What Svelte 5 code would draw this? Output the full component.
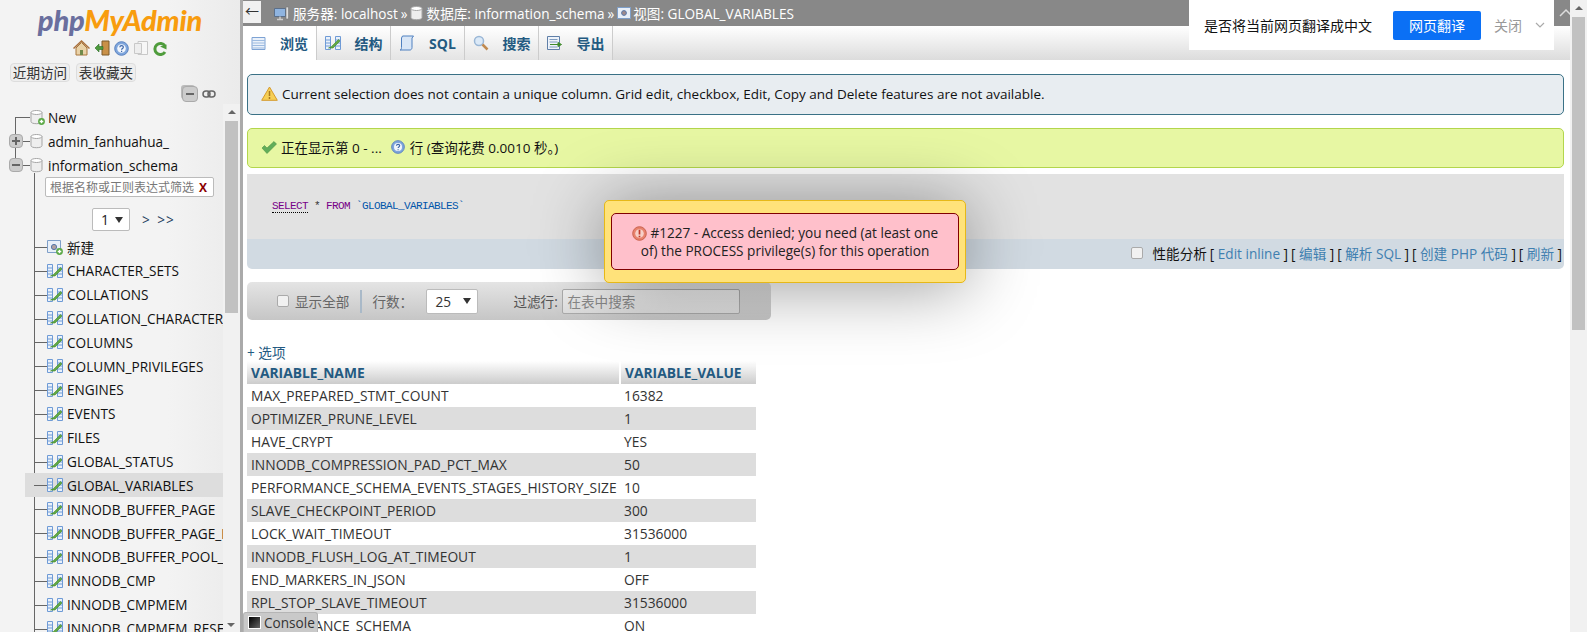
<script>
  const tables = [
    "CHARACTER_SETS", "COLLATIONS", "COLLATION_CHARACTER_SET_APPLICABILITY", "COLUMNS",
    "COLUMN_PRIVILEGES", "ENGINES", "EVENTS", "FILES", "GLOBAL_STATUS", "GLOBAL_VARIABLES",
    "INNODB_BUFFER_PAGE", "INNODB_BUFFER_PAGE_LRU", "INNODB_BUFFER_POOL_STATS", "INNODB_CMP",
    "INNODB_CMPMEM", "INNODB_CMPMEM_RESET"
  ];
  const rows = [
    ["MAX_PREPARED_STMT_COUNT", "16382"],
    ["OPTIMIZER_PRUNE_LEVEL", "1"],
    ["HAVE_CRYPT", "YES"],
    ["INNODB_COMPRESSION_PAD_PCT_MAX", "50"],
    ["PERFORMANCE_SCHEMA_EVENTS_STAGES_HISTORY_SIZE", "10"],
    ["SLAVE_CHECKPOINT_PERIOD", "300"],
    ["LOCK_WAIT_TIMEOUT", "31536000"],
    ["INNODB_FLUSH_LOG_AT_TIMEOUT", "1"],
    ["END_MARKERS_IN_JSON", "OFF"],
    ["RPL_STOP_SLAVE_TIMEOUT", "31536000"],
    ["PERFORMANCE_SCHEMA", "ON"]
  ];
  const actions = ["Edit inline", "编辑", "解析 SQL", "创建 PHP 代码", "刷新"];
</script>

{#snippet db(plus)}
  <svg class="ico" width="16" height="16" viewBox="0 0 16 16">
    <path d="M2 3.500v9c0 1.400 2.200 2.200 5.500 2.200s5.500-.8 5.500-2.200v-9z" fill="#eee" stroke="#a5a5a5"/>
    <ellipse cx="7.500" cy="3.500" rx="5.500" ry="2" fill="#fff" stroke="#a5a5a5"/>
    {#if plus}
      <circle cx="12.500" cy="12.500" r="3.400" fill="#5aa845"/>
      <path d="M10.700 12.500h3.600M12.500 10.700v3.600" stroke="#fff" stroke-width="1.300"/>
    {/if}
  </svg>
{/snippet}

{#snippet tableIco()}
  <svg class="ico" width="16" height="16" viewBox="0 0 16 16">
    <path d="M.5 1.500h5v13h-5zM10.500 1.500h5v13h-5z" fill="#eaf1fa" stroke="#6f9bd6"/>
    <path d="M.5 5h5M.5 8h5M.5 11h5M10.500 5h5M10.500 8h5M10.500 11h5" stroke="#6f9bd6"/>
    <path d="M3.500 13l3-1.500 7-7 1.500 1.500-7 7z" fill="#62a844" stroke="#3f8a2c" stroke-width=".6"/>
  </svg>
{/snippet}

{#snippet expander(sign)}
  <span class="expander"><i class:v={sign === "+"}></i></span>
{/snippet}

<div class="page">
  <nav class="nav">
    <div class="logo"><em>php</em><b>MyAdmin</b></div>
    <div class="quick">
      <svg width="17" height="16" viewBox="0 0 17 16">
        <path d="M3 8v7h11V8L8.500 2.500z" fill="#e9d2a8" stroke="#a8763c"/>
        <path d="M.5 8.500l8-7.500 8 7.500" fill="none" stroke="#a9703c" stroke-width="1.500"/>
        <path d="M7 10h3v5H7z" fill="#6f8a4a"/>
      </svg>
      <svg width="16" height="16" viewBox="0 0 16 16">
        <path d="M8 1h7v14H8z" fill="#c99048" stroke="#7d5a2a"/>
        <path d="M1 8l4-4v2.500h4v3H5V12z" fill="#4c9a3c" stroke="#2e6b26" stroke-width=".6"/>
      </svg>
      <svg width="15" height="15" viewBox="0 0 15 15">
        <circle cx="7.500" cy="7.500" r="6.800" fill="#7fa6dc" stroke="#5a82c0"/>
        <circle cx="7.500" cy="7.500" r="4.300" fill="#f2f6fc"/>
        <path d="M5.800 6.200c.2-2.200 3.600-2 3.500 0 0 1.300-1.700 1.300-1.700 2.500M7.600 9.800v1.200" fill="none" stroke="#3c66a8" stroke-width="1.200"/>
      </svg>
      <svg width="16" height="16" viewBox="0 0 16 16">
        <path d="M5 1.500h9.500v13H5z" fill="#f7f7f7" stroke="#c8c8c8"/>
        <path d="M1.500 3.500h7v10h-7z" fill="#eee" stroke="#c8c8c8"/>
      </svg>
      <svg width="14" height="15" viewBox="0 0 14 15">
        <path d="M12 5A5.500 5.500 0 1 0 12 11" fill="none" stroke="#4f9c3c" stroke-width="3"/>
        <path d="M7 5.500l6.500-2v5z" fill="#4f9c3c"/>
      </svg>
    </div>
    <div class="navbtns"><span>近期访问</span><span>表收藏夹</span></div>
    <div class="treetools">
      <span class="collapse"><i></i></span>
      <svg width="14" height="8" viewBox="0 0 14 8">
        <rect x="1" y="1" width="7" height="6" rx="3" fill="none" stroke="#666" stroke-width="1.500"/>
        <rect x="6" y="1" width="7" height="6" rx="3" fill="none" stroke="#666" stroke-width="1.500"/>
      </svg>
    </div>

    <div class="treewrap">
      <div class="tree">
        <div class="dbrow first">{@render db(true)}<span>New</span></div>
        <div class="dbrow">{@render expander("+")}{@render db(false)}<span>admin_fanhuahua_</span></div>
        <div class="dbrow last">{@render expander("-")}{@render db(false)}<span>information_schema</span></div>

        <div class="sub">
          <div class="filter"><span>根据名称或正则表达式筛选</span><b>X</b></div>
          <div class="pager">
            <span class="pagesel">1<i class="caret"></i></span>
            <span class="pagelinks">&gt; &gt;&gt;</span>
          </div>
          <div class="item new">
            <svg class="ico" width="16" height="16" viewBox="0 0 16 16">
              <path d="M.5 1.500h13v12H.5z" fill="#e8eff8" stroke="#7e9fc9"/>
              <circle cx="7" cy="8" r="2.600" fill="#b0a0a0" stroke="#5577aa"/>
              <circle cx="12.500" cy="12.500" r="3.400" fill="#5aa845"/>
              <path d="M10.700 12.500h3.600M12.500 10.700v3.600" stroke="#fff" stroke-width="1.300"/>
            </svg>
            <span>新建</span>
          </div>
          {#each tables as t}
            <div class="item" class:on={t === "GLOBAL_VARIABLES"}>{@render tableIco()}<span>{t}</span></div>
          {/each}
        </div>
      </div>
      <div class="navscroll">
        <i class="up"></i>
        <div class="thumb"></div>
        <i class="down"></i>
      </div>
    </div>
  </nav>

  <main class="main">
    <header class="crumbs">
      <span class="back">←</span>
      <svg width="15" height="15" viewBox="0 0 15 15">
        <path d="M.5 2.500h11v8H.5z" fill="#8fb4e0" stroke="#5b6f8a"/>
        <path d="M3 13.500h6M6 10.500v3" stroke="#ccc" stroke-width="1.500"/>
        <path d="M12 1h2.500v12H12z" fill="#ddd" stroke="#777" stroke-width=".6"/>
      </svg>
      <span class="c">服务器: localhost</span><span class="sep">»</span>
      {@render db(false)}
      <span class="c">数据库: information_schema</span><span class="sep">»</span>
      <svg class="viewico" width="14" height="14" viewBox="0 0 14 14">
        <path d="M.5 1.500h13v11H.5z" fill="#e8eff8" stroke="#7e9fc9"/>
        <circle cx="7" cy="7" r="2.400" fill="#a08a8a" stroke="#5577aa"/>
      </svg>
      <span class="c">视图: GLOBAL_VARIABLES</span>
      <svg class="hide" width="16" height="10" viewBox="0 0 16 10"><path d="M2 8l6-6 6 6" fill="none" stroke="#ddd" stroke-width="1.500"/></svg>
    </header>

    <div class="tabs">
      <div class="tab active">
        <svg width="15" height="15" viewBox="0 0 15 15">
          <path d="M1 1.500h13v12H1z" fill="#eaf1fa" stroke="#7ea3d4"/>
          <path d="M1 4.500h13M1 7h13M1 9.500h13M1 12h13" stroke="#9dbbe0"/>
        </svg>
        <span>浏览</span>
      </div>
      <div class="tab">{@render tableIco()}<span>结构</span></div>
      <div class="tab">
        <svg width="16" height="16" viewBox="0 0 16 16">
          <path d="M3.500 1h11l-1.500 2v9.500c0 1.500-1 2.500-2 2.500H1c1 0 1.500-1 1.500-2.500V3z" fill="#d9e6f6" stroke="#4f80c0"/>
        </svg>
        <span>SQL</span>
      </div>
      <div class="tab">
        <svg width="16" height="16" viewBox="0 0 16 16">
          <circle cx="6" cy="6" r="4.500" fill="#dbe9f7" stroke="#9ab7d6" stroke-width="1.500"/>
          <path d="M9.500 9.500l5 5" stroke="#c08a50" stroke-width="2.500"/>
        </svg>
        <span>搜索</span>
      </div>
      <div class="tab">
        <svg width="16" height="16" viewBox="0 0 16 16">
          <path d="M.5 1.500h12v13H.5z" fill="#eef3fa" stroke="#5f7fa8"/>
          <path d="M2.500 4.500h8M2.500 7h8M2.500 12h8" stroke="#7f9cc0"/>
          <path d="M3 9.500h10M11 7.500l3.500 2-3.500 2z" fill="#4c9a3c" stroke="#3f8a2c"/>
        </svg>
        <span>导出</span>
      </div>
    </div>

    <div class="content">
      <div class="notice warn">
        <svg width="17" height="15" viewBox="0 0 17 15">
          <path d="M8.500 1L16.300 14.300H.7z" fill="#f6cf55" stroke="#d59a2c" stroke-linejoin="round"/>
          <path d="M8.500 5v5M8.500 11v2" stroke="#a97a20" stroke-width="1.500"/>
        </svg>
        <span>Current selection does not contain a unique column. Grid edit, checkbox, Edit, Copy and Delete features are not available.</span>
      </div>
      <div class="notice ok">
        <svg width="16" height="13" viewBox="0 0 16 13">
          <path d="M1 7l2.500-2.500L6 7l7-6.500L15.500 3 6 12.500z" fill="#62ad5a" stroke="#4b9544" stroke-width=".6"/>
        </svg>
        <span>正在显示第 0 - ...</span>
        <svg class="help" width="14" height="14" viewBox="0 0 15 15">
          <circle cx="7.500" cy="7.500" r="6.800" fill="#7fa6dc" stroke="#5a82c0"/>
          <circle cx="7.500" cy="7.500" r="4.300" fill="#f2f6fc"/>
          <path d="M5.800 6.200c.2-2.200 3.600-2 3.500 0 0 1.300-1.700 1.300-1.700 2.500M7.600 9.800v1.200" fill="none" stroke="#3c66a8" stroke-width="1.200"/>
        </svg>
        <span>行 (查询花费 0.0010 秒。)</span>
      </div>

      <div class="sqlbox">
        <div class="code">
          <span class="kw under">SELECT</span> <span class="star">*</span> <span class="kw">FROM</span> <span class="str">`GLOBAL_VARIABLES`</span>
        </div>
        <div class="sqlactions">
          <span class="cb"></span>
          <span class="lbl">性能分析</span>
          {#each actions as a}
            <span class="act">[ <a href="#top">{a}</a> ]</span>
          {/each}
        </div>
      </div>

      <div class="toolbar">
        <span class="cb"></span>
        <span class="showall">显示全部</span>
        <span class="divider"></span>
        <span class="rowsn">行数：</span>
        <span class="rowsel">25<i class="caret"></i></span>
        <span class="flabel">过滤行:</span>
        <span class="search">在表中搜索</span>
      </div>

      <div class="opts">+ 选项</div>
      <table>
        <thead>
          <tr><th>VARIABLE_NAME</th><th>VARIABLE_VALUE</th></tr>
        </thead>
        <tbody>
          {#each rows as r}
            <tr><td>{r[0]}</td><td>{r[1]}</td></tr>
          {/each}
        </tbody>
      </table>
    </div>
  </main>

  <div class="pagescroll">
    <i class="up"></i>
    <div class="thumb"></div>
  </div>

  <div class="translate">
    <span class="q">是否将当前网页翻译成中文</span>
    <span class="go">网页翻译</span>
    <span class="close">关闭</span>
    <svg width="10" height="6" viewBox="0 0 10 6"><path d="M1 1l4 4 4-4" fill="none" stroke="#aaa" stroke-width="1.200"/></svg>
  </div>

  <div class="dialog">
    <div class="err">
      <svg width="15" height="15" viewBox="0 0 15 15">
        <circle cx="7.500" cy="7.500" r="6.800" fill="#e8816c" stroke="#c9634f"/>
        <circle cx="7.500" cy="7.500" r="4.300" fill="#f7d0c8"/>
        <path d="M7.500 3.800v4.700M7.500 9.700v1.600" stroke="#c0392b" stroke-width="1.700"/>
      </svg>
      #1227 - Access denied; you need (at least one<br />of) the PROCESS privilege(s) for this operation
    </div>
  </div>

  <div class="console"><i></i>Console</div>
</div>

<style>
  :global(body) {
    margin: 0;
    background: #fff;
  }

  .page {
    position: relative;
    display: flex;
    height: 632px;
    overflow: hidden;
    font-family: "Open Sans", "Noto Sans CJK SC", sans-serif;
    font-size: 13.6px;
    color: #222;
  }

  .ico {
    flex: none;
  }

  /* left panel */
  .nav {
    flex: none;
    box-sizing: border-box;
    width: 243px;
    border-right: 3px solid #aaa;
    background: linear-gradient(to right, #f3f3f3 70%, #ebebeb);
    display: flex;
    flex-direction: column;
  }

  .logo {
    margin-top: 3px;
    height: 34px;
    text-align: center;
    font-family: "Lato", sans-serif;
    font-size: 29px;
    line-height: 34px;
    font-style: italic;
    font-weight: 900;
    letter-spacing: -0.2px;
  }

  .logo em {
    color: #6a6f9e;
  }

  .logo b {
    color: #f89c0e;
  }

  .quick {
    margin-top: 2px;
    height: 18px;
    display: flex;
    justify-content: center;
    align-items: center;
    gap: 4px;
  }

  .navbtns {
    margin: 6px 0 0 10px;
    display: flex;
    gap: 6px;
  }

  .navbtns span {
    box-sizing: border-box;
    width: 60px;
    height: 19px;
    line-height: 18px;
    text-align: center;
    background: #eee;
    border: 1px solid #ddd;
    border-radius: 4px;
    color: #333;
    white-space: nowrap;
  }

  .treetools {
    margin: 1px 24px 0 0;
    height: 21px;
    display: flex;
    justify-content: flex-end;
    align-items: center;
    gap: 4px;
  }

  .collapse {
    width: 14px;
    height: 14px;
    border: 1px solid #aaa;
    border-radius: 4px;
    background: #ccc;
    box-shadow: -2px -2px 0 -1px #bbb;
    display: flex;
    align-items: center;
    justify-content: center;
  }

  .collapse i {
    width: 8px;
    height: 2px;
    background: #666;
  }

  .treewrap {
    flex: 1;
    min-height: 0;
    display: flex;
    overflow: hidden;
  }

  .tree {
    flex: none;
    width: 223px;
    padding-top: 1px;
    overflow: hidden;
    position: relative;
  }

  .dbrow {
    position: relative;
    height: 24px;
    display: flex;
    align-items: center;
    padding-left: 29px;
    gap: 3px;
    white-space: nowrap;
    color: #111;
  }

  .dbrow::before {
    content: "";
    position: absolute;
    left: 15px;
    top: 0;
    bottom: 0;
    width: 1px;
    background: #666;
  }

  .dbrow::after {
    content: "";
    position: absolute;
    left: 15px;
    top: 12px;
    width: 15px;
    height: 1px;
    background: #666;
  }

  .dbrow.first::before {
    top: 12px;
  }

  .dbrow.last::before {
    bottom: 12px;
  }

  .dbrow .ico {
    position: relative;
    z-index: 1;
  }

  .expander {
    position: absolute;
    left: 9px;
    top: 5px;
    z-index: 1;
    box-sizing: border-box;
    width: 14px;
    height: 14px;
    background: #ccc;
    border: 1px solid #aaa;
    border-radius: 4px;
  }

  .expander i {
    position: absolute;
    left: 2px;
    top: 5px;
    width: 8px;
    height: 2px;
    background: #666;
  }

  .expander i.v::after {
    content: "";
    position: absolute;
    left: 3px;
    top: -3px;
    width: 2px;
    height: 8px;
    background: #666;
  }

  .sub {
    position: relative;
  }

  .sub::before {
    content: "";
    position: absolute;
    left: 34px;
    top: -4px;
    bottom: 0;
    width: 1px;
    background: #666;
  }

  .filter {
    position: relative;
    box-sizing: border-box;
    margin: 0 0 0 45px;
    width: 169px;
    height: 20px;
    border: 1px solid #bbb;
    border-radius: 2px;
    background: #fff;
    display: flex;
    align-items: center;
    justify-content: space-between;
    padding: 0 6px 0 4px;
    font-size: 12px;
    color: #777;
    white-space: nowrap;
  }

  .filter b {
    color: #8b0000;
    font-size: 12px;
  }

  .pager {
    box-sizing: border-box;
    height: 38px;
    padding: 6px 0 0 92px;
    display: flex;
    align-items: center;
    gap: 12px;
  }

  .pagesel,
  .rowsel {
    position: relative;
    box-sizing: border-box;
    height: 23px;
    line-height: 22px;
    background: #fff;
    border: 1px solid #bbb;
    border-radius: 2px;
    padding-left: 8px;
  }

  .pagesel {
    width: 38px;
    font-size: 14px;
  }

  .caret {
    position: absolute;
    right: 6px;
    top: 8px;
    border: 4px solid transparent;
    border-top: 6px solid #333;
    border-bottom: 0;
  }

  .pagelinks {
    color: #1f3f5f;
    word-spacing: 2px;
    letter-spacing: 1px;
  }

  .item {
    position: relative;
    height: 23.85px;
    display: flex;
    align-items: center;
    padding-left: 47px;
    gap: 4px;
    white-space: nowrap;
    color: #111;
  }

  .item::before {
    content: "";
    position: absolute;
    left: 34px;
    top: 12px;
    width: 13px;
    height: 1px;
    background: #666;
  }

  .item.on {
    margin-left: 25px;
    padding-left: 22px;
    background: #ddd;
  }

  .item.on::before {
    left: 9px;
  }

  .navscroll {
    flex: none;
    width: 17px;
    background: #f1f1f1;
    display: flex;
    flex-direction: column;
    align-items: center;
    padding-top: 6px;
    position: relative;
  }

  .navscroll .thumb {
    width: 13px;
    height: 192px;
    margin-top: 7px;
    background: #c1c1c1;
  }

  .up {
    width: 0;
    height: 0;
    border: 4px solid transparent;
    border-bottom: 4px solid #666;
    border-top: 0;
  }

  .down {
    position: absolute;
    left: 4px;
    bottom: 5px;
    border: 4px solid transparent;
    border-top: 4px solid #666;
    border-bottom: 0;
  }

  /* right side */
  .main {
    flex: 1;
    min-width: 0;
  }

  .crumbs {
    height: 26px;
    background: #888;
    display: flex;
    align-items: center;
    gap: 4px;
    color: #fff;
    white-space: nowrap;
  }

  .crumbs .ico {
    margin: 0 -2px;
  }

  .viewico {
    margin-right: -2px;
  }

  .back {
    box-sizing: border-box;
    align-self: flex-start;
    width: 18px;
    height: 22px;
    margin: 1px 9px 0 0;
    background: #f1f1f1;
    color: #333;
    text-align: center;
    line-height: 20px;
    font-size: 14px;
  }

  .sep {
    margin: 0 -1px;
  }

  .hide {
    margin-left: auto;
    margin-right: -4px;
  }

  .tabs {
    height: 34px;
    display: flex;
    background: linear-gradient(#fff, #dcdcdc);
  }

  .tab {
    box-sizing: border-box;
    width: 74px;
    display: flex;
    align-items: center;
    justify-content: center;
    gap: 14px;
    border-right: 1px solid #ccc;
    font-size: 14px;
    font-weight: 700;
    color: #235a81;
    background: linear-gradient(#fff, #e4e4e4);
  }

  .tab.active {
    background: #fff;
  }

  .content {
    padding: 14px 6px 0 4px;
  }

  .notice {
    box-sizing: border-box;
    display: flex;
    align-items: center;
    border-radius: 5px;
    padding: 0 0 2px 13px;
    gap: 4px;
    color: #111;
    font-size: 13.5px;
  }

  .warn {
    height: 41px;
    background: #e8edf1;
    border: 1px solid #3a7186;
  }

  .ok {
    height: 40px;
    margin-top: 13px;
    background: #e7f7a3;
    border: 1px solid #b3d64c;
  }

  .help {
    margin: 0 1px 0 5px;
  }

  .sqlbox {
    margin-top: 6px;
    border-radius: 0 0 5px 5px;
    overflow: hidden;
  }

  .code {
    box-sizing: border-box;
    height: 65px;
    background: #e2e2e2;
    padding: 23px 0 0 25px;
    font-family: "Liberation Mono", monospace;
    font-size: 11px;
    letter-spacing: -0.6px;
    line-height: 18px;
    color: #333;
  }

  .kw {
    color: #770088;
  }

  .under {
    border-bottom: 1px dotted #000;
  }

  .str {
    color: #0055aa;
  }

  .sqlactions {
    height: 30px;
    box-sizing: border-box;
    padding: 0 2px 2px 0;
    background: #d1dae2;
    display: flex;
    align-items: center;
    justify-content: flex-end;
    gap: 3px;
    color: #111;
    white-space: nowrap;
  }

  .act a {
    color: #3f7fb0;
    text-decoration: none;
  }

  .cb {
    box-sizing: border-box;
    width: 12px;
    height: 12px;
    background: #f1f1f1;
    border: 1px solid #aaa;
    border-radius: 2px;
  }

  .sqlactions .cb {
    margin-right: 6px;
  }

  .toolbar {
    box-sizing: border-box;
    margin-top: 13px;
    width: 524px;
    height: 38px;
    border-radius: 5px;
    background: linear-gradient(#e4e4e4, #c6c6c6);
    display: flex;
    align-items: center;
    padding-left: 30px;
    color: #666;
    white-space: nowrap;
  }

  .showall {
    margin-left: 6px;
  }

  .divider {
    width: 2px;
    height: 23px;
    margin: 0 10px 0 11px;
    background: #a9b9c8;
  }

  .rowsn {
    width: 54px;
  }

  .rowsel {
    width: 52px;
    height: 25px;
    line-height: 24px;
    color: #333;
  }

  .flabel {
    margin-left: 35px;
    width: 49px;
    color: #555;
  }

  .search {
    box-sizing: border-box;
    width: 178px;
    height: 25px;
    line-height: 23px;
    padding-left: 4px;
    border: 1px solid #aaa;
    border-radius: 2px;
    background: linear-gradient(#eee, #ddd);
    color: #888;
  }

  .opts {
    margin-top: 24px;
    height: 17px;
    line-height: 17px;
    color: #235a81;
  }

  table {
    border-collapse: collapse;
    width: 509px;
    table-layout: fixed;
    color: #333;
    font-size: 13.8px;
  }

  th {
    height: 23px;
    padding: 0 4px;
    text-align: left;
    font-weight: 700;
    color: #235a81;
    background: linear-gradient(#fff, #ccc);
    border-left: 2px solid #fff;
  }

  th:first-child {
    width: 364px;
    border-left: 0;
  }

  td {
    height: 23px;
    padding: 0 4px;
    white-space: nowrap;
    overflow: hidden;
  }

  tbody tr:nth-child(even) {
    background: #ddd;
  }

  .pagescroll {
    flex: none;
    width: 17px;
    background: #f1f1f1;
    display: flex;
    flex-direction: column;
    align-items: center;
    padding-top: 6px;
  }

  .pagescroll .thumb {
    width: 13px;
    height: 313px;
    margin-top: 7px;
    background: #c1c1c1;
  }

  /* overlays */
  .translate {
    position: absolute;
    left: 1189px;
    top: 0;
    box-sizing: border-box;
    width: 365px;
    height: 50px;
    background: #fff;
    display: flex;
    align-items: center;
    padding-left: 15px;
    white-space: nowrap;
    font-size: 14px;
  }

  .q {
    color: #111;
  }

  .go {
    width: 88px;
    height: 29px;
    line-height: 29px;
    margin-left: 21px;
    text-align: center;
    background: #0b70f5;
    color: #fff;
    border-radius: 2px;
  }

  .close {
    margin: 0 13px;
    color: #999;
  }

  .dialog {
    position: absolute;
    left: 604px;
    top: 200px;
    box-sizing: border-box;
    width: 362px;
    height: 83px;
    padding: 12px 6px 0;
    background: #ffe27a;
    border: 1px solid #e6b818;
    border-radius: 5px;
    box-shadow: 0 4px 70px rgba(0, 0, 0, 0.4);
  }

  .err {
    box-sizing: border-box;
    height: 57px;
    padding: 10px 0 0;
    background: #ffc0cb;
    border: 1px solid #800000;
    border-radius: 5px;
    color: #222;
    text-align: center;
    line-height: 18px;
  }

  .err svg {
    vertical-align: -3px;
  }

  .console {
    position: absolute;
    left: 243px;
    bottom: 0;
    box-sizing: border-box;
    width: 75px;
    height: 20px;
    background: #c9c9c9;
    border: 1px solid #b5b5b5;
    border-bottom: 0;
    border-radius: 3px 3px 0 0;
    display: flex;
    align-items: center;
    padding-left: 4px;
    gap: 3px;
    color: #333;
  }

  .console i {
    width: 11px;
    height: 11px;
    background: linear-gradient(135deg, #000, #666);
    border: 1px solid #fff;
  }
</style>
